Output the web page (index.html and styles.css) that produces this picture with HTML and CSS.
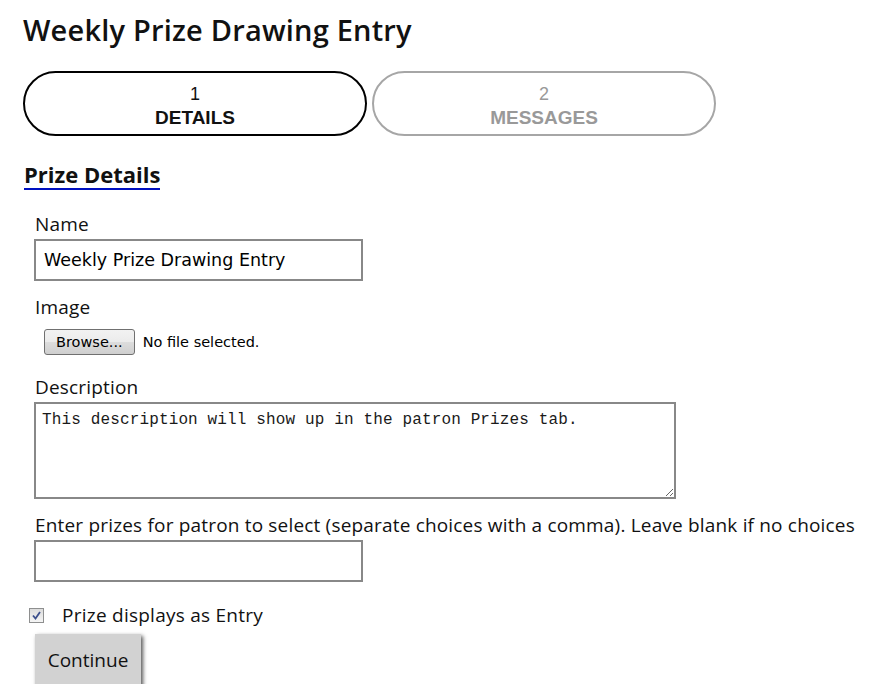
FILE: index.html
```html
<!DOCTYPE html>
<html>
<head>
<meta charset="utf-8">
<link rel="stylesheet" href="styles.css">
</head>
<body>
<div class="page">
  <h1 class="title">Weekly Prize Drawing Entry</h1>
  <div class="steps">
    <div class="step active"><span class="num">1</span><span class="lbl">DETAILS</span></div>
    <div class="step"><span class="num">2</span><span class="lbl">MESSAGES</span></div>
  </div>
  <h2 class="section">Prize Details</h2>
  <form class="form">
    <div class="field">
      <label class="label">Name</label>
      <input class="text" type="text" value="Weekly Prize Drawing Entry">
    </div>
    <div class="field">
      <label class="label">Image</label>
      <div class="file"><span class="browse">Browse...</span><span class="nofile">No file selected.</span></div>
    </div>
    <div class="field">
      <label class="label">Description</label>
      <textarea class="area">This description will show up in the patron Prizes tab.</textarea>
    </div>
    <div class="field">
      <label class="label">Enter prizes for patron to select (separate choices with a comma). Leave blank if no choices</label>
      <input class="text" type="text" value="">
    </div>
    <div class="check">
      <span class="box"><svg width="11" height="11" viewBox="0 0 11 11"><path d="M2 5.5 L4.5 8.5 L9 2" fill="none" stroke="#3c4f8c" stroke-width="1.8"/></svg></span>
      <span class="checklbl">Prize displays as Entry</span>
    </div>
    <div class="btnrow"><span class="continue">Continue</span></div>
  </form>
</div>
</body>
</html>
```
FILE: styles.css
```css
html, body { margin: 0; padding: 0; background: #fff; }
body { font-family: "Open Sans", "Noto Sans", sans-serif; color: #111; }
.page { padding: 0 0 0 23px; }
.title { font-size: 29px; font-weight: 600; margin: 0; padding-top: 11px; line-height: 38px; letter-spacing: 0.2px; }
.steps { display: flex; gap: 5px; margin-top: 22px; }
.step { width: 344px; height: 65px; box-sizing: border-box; border: 2px solid #a6a6a6; border-radius: 33px; display: flex; flex-direction: column; align-items: center; justify-content: center; font-family: "Liberation Sans", Arial, sans-serif; color: #999; padding-top: 4px; }
.step.active { border-color: #000; color: #111; }
.num { font-size: 18px; line-height: 24px; }
.lbl { font-size: 19px; line-height: 24px; font-weight: bold; }
.section { display: inline-block; margin: 25px 0 0 1px; font-size: 22px; font-weight: 700; line-height: 27px; border-bottom: 2px solid #0010c0; }
.form { padding-left: 12px; margin-top: 22px; }
.field { display: flex; flex-direction: column; align-items: flex-start; margin-bottom: 14px; }
.label { font-size: 19px; line-height: 24px; letter-spacing: 0.18px; }
.text { box-sizing: border-box; width: 329px; height: 42px; border: 2px solid #888; margin: 3px 0 0 -1px; padding: 0 8px; font-family: "DejaVu Sans", Verdana, sans-serif; font-size: 17.5px; color: #000; }
.file { display: flex; align-items: center; margin-top: 10px; margin-bottom: 6px; font-family: "DejaVu Sans", Verdana, sans-serif; font-size: 14.5px; }
.browse { box-sizing: border-box; height: 26px; padding: 0 11px; margin-left: 9px; border: 1px solid #707070; border-radius: 3px; background: linear-gradient(#f2f2f2, #ebebeb 50%, #dddddd 50%, #cfcfcf); display: flex; align-items: center; color: #000; }
.nofile { margin-left: 8px; color: #000; }
.area { box-sizing: border-box; width: 642px; height: 97px; border: 2px solid #888; margin: 3px 0 0 -1px; padding: 7px 6px; font-family: "Liberation Mono", "Courier New", monospace; font-size: 16px; letter-spacing: 0.14px; resize: both; color: #1a1a1a; }
.check { display: flex; align-items: center; margin-left: -6px; margin-top: 20px; }
.box { width: 13px; height: 13px; border: 1px solid #8e8f8f; background: linear-gradient(#dcdcdc, #f5f5f5); display: flex; align-items: center; justify-content: center; }
.checklbl { font-size: 19px; margin-left: 18px; letter-spacing: 0.25px; }
.btnrow { margin-top: 6px; }
.continue { display: inline-flex; align-items: center; justify-content: center; width: 106px; height: 56px; box-sizing: border-box; background: #d2d2d2; font-size: 19px; box-shadow: 2px 2px 4px #555; color: #111; padding-bottom: 4px; }
```
